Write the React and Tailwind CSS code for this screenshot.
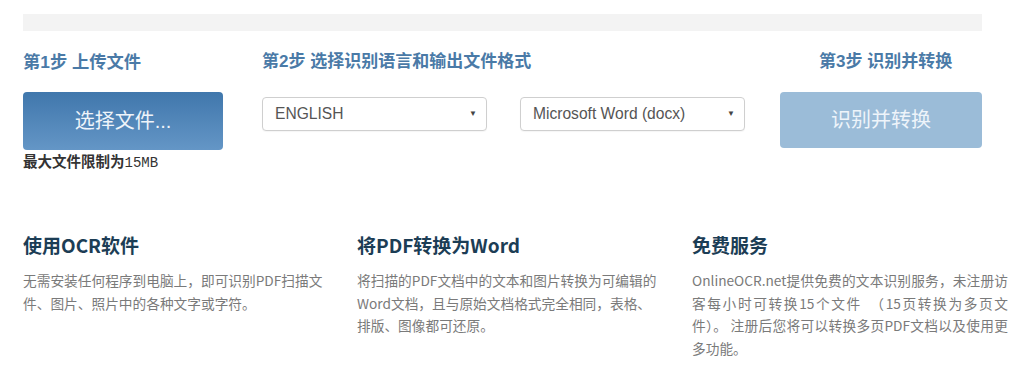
const cjk = "font-['Liberation_Sans','Noto_Sans_CJK_SC',sans-serif]";

function Select({ value }) {
  return (
    <div className="flex h-[34px] w-[225px] items-center justify-between rounded-[4px] border border-[#cfcfcf] bg-white pl-[12px] pr-[9px] shadow-[0_1px_1px_rgba(0,0,0,0.04)]">
      <span className="text-[15.6px] text-[#555]">{value}</span>
      <span className="text-[8px] text-[#444]">▼</span>
    </div>
  );
}

function Feature({ title, children, wide }) {
  return (
    <div className={wide ? "w-[316px]" : "w-[303px]"}>
      <h2 className="font-['Noto_Sans_CJK_SC',sans-serif] text-[19px] font-bold leading-[26px] text-[#1c3d55]">{title}</h2>
      <p
        className={`mt-[11px] font-['Noto_Sans_CJK_SC',sans-serif] text-[13.7px] leading-[22.5px] text-[#7a7a7a] ${
          wide ? "text-justify" : ""
        }`}
      >
        {children}
      </p>
    </div>
  );
}

export default function App() {
  return (
    <div className={`h-[390px] w-[1024px] overflow-hidden bg-white pl-[23px] ${cjk}`}>
      <div className="mt-[14px] h-[17px] w-[959px] bg-[#f3f3f3]" />

      <div className="mt-[19px] flex w-[959px]">
        <div className="w-[200px]">
          <h3 className="text-[17.3px] font-bold leading-[24px] text-[#4a7aa7]">第1步 上传文件</h3>
          <button className="mt-[18px] flex h-[58px] w-[200px] items-center justify-center rounded-[4px] bg-gradient-to-b from-[#4077ac] to-[#6496c6] text-[20px] text-[#eef4fa]">
            选择文件...
          </button>
          <div className="mt-[2px] text-[14.5px] font-bold leading-[20px] text-[#333]">
            最大文件限制为<span className="font-['Liberation_Mono',monospace] text-[14px] font-normal">15MB</span>
          </div>
        </div>

        <div className="ml-[39px]">
          <h3 className="text-[17px] font-bold leading-[24px] text-[#4a7aa7]">第2步 选择识别语言和输出文件格式</h3>
          <div className="mt-[23px] flex gap-[33px]">
            <Select value="ENGLISH" />
            <Select value="Microsoft Word (docx)" />
          </div>
        </div>

        <div className="ml-auto w-[202px]">
          <h3 className="pl-[39px] text-[17px] font-bold leading-[24px] text-[#4a7aa7]">第3步 识别并转换</h3>
          <button className="mt-[18px] flex h-[56px] w-[202px] items-center justify-center rounded-[4px] bg-[#9bbcd8] text-[20px] text-[#eef4fa]">
            识别并转换
          </button>
        </div>
      </div>

      <div className="mt-[59px] flex">
        <div className="w-[334px]">
          <Feature title="使用OCR软件">无需安装任何程序到电脑上，即可识别PDF扫描文件、图片、照片中的各种文字或字符。</Feature>
        </div>
        <div className="w-[335px]">
          <Feature title="将PDF转换为Word">
            将扫描的PDF文档中的文本和图片转换为可编辑的Word文档，且与原始文档格式完全相同，表格、排版、图像都可还原。
          </Feature>
        </div>
        <Feature title="免费服务" wide>
          OnlineOCR.net提供免费的文本识别服务，未注册访客每小时可转换15个文件　（15页转换为多页文件）。 注册后您将可以转换多页PDF文档以及使用更多功能。
        </Feature>
      </div>
    </div>
  );
}
